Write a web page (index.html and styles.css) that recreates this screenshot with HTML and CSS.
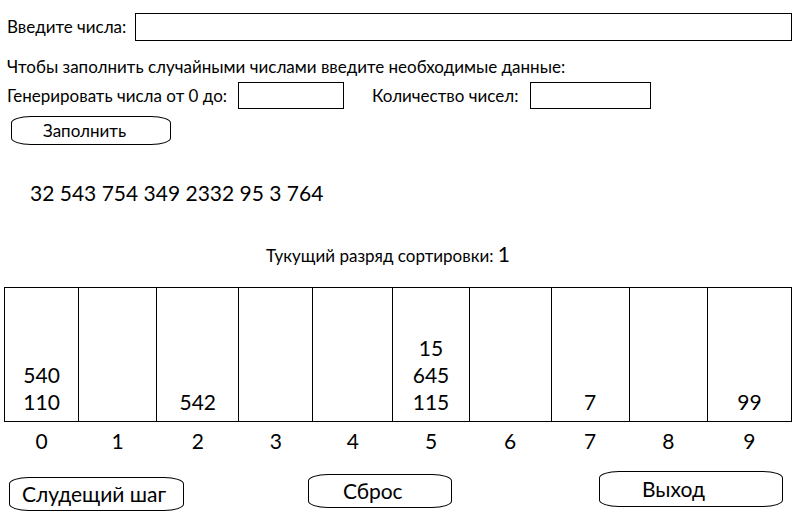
FILE: index.html
```html
<!DOCTYPE html>
<html lang="ru">
<head>
<meta charset="utf-8">
<title>Поразрядная сортировка</title>
<link rel="stylesheet" href="styles.css">
</head>
<body>
<main class="app">
  <form class="form">
    <div class="row row-numbers">
      <label for="numbers">Введите числа:</label>
      <input class="field field-wide" id="numbers" type="text">
    </div>
    <p class="hint">Чтобы заполнить случайными числами введите необходимые данные:</p>
    <div class="row row-random">
      <label class="label-max" for="max">Генерировать числа от 0 до:</label>
      <input class="field field-max" id="max" type="text">
      <label class="label-count" for="count">Количество чисел:</label>
      <input class="field field-count" id="count" type="text">
    </div>
    <button class="btn btn-fill" type="button">Заполнить</button>
  </form>

  <p class="sequence">32 543 754 349 2332 95 3 764</p>
  <p class="digit">Тукущий разряд сортировки: <span class="digit-value">1</span></p>

  <table class="buckets">
    <colgroup>
      <col class="col-a"><col class="col-c"><col class="col-e"><col class="col-a"><col class="col-d">
      <col class="col-b"><col class="col-e"><col class="col-c"><col class="col-c"><col class="col-f">
    </colgroup>
    <tbody>
      <tr>
        <td>540<br>110</td><td></td><td>542</td><td></td><td></td>
        <td>15<br>645<br>115</td><td></td><td>7</td><td></td><td>99</td>
      </tr>
    </tbody>
    <tfoot>
      <tr>
        <th>0</th><th>1</th><th>2</th><th>3</th><th>4</th>
        <th>5</th><th>6</th><th>7</th><th>8</th><th>9</th>
      </tr>
    </tfoot>
  </table>

  <div class="actions">
    <button class="btn btn-next" type="button">Слудещий шаг</button>
    <button class="btn btn-reset" type="button">Сброс</button>
    <button class="btn btn-exit" type="button">Выход</button>
  </div>
</main>
</body>
</html>
```
FILE: styles.css
```css
* {
  box-sizing: border-box;
}

body {
  margin: 0;
  background: #fff;
  color: #000;
  font-family: Lato, "Noto Sans", sans-serif;
  font-size: 17px;
  line-height: 24px;
}

p {
  margin: 0;
}

.form {
  padding: 13px 8px 0 7px;
}

.row {
  display: flex;
  align-items: center;
}

.row-numbers {
  gap: 9px;
}

.field {
  height: 27px;
  padding: 0 6px;
  border: 1px solid #000;
  border-radius: 0;
  background: #fff;
  font: inherit;
}

.field-wide {
  flex: 1;
  min-width: 0;
  height: 28px;
}

.hint {
  margin: 14px 0 3px;
}

.label-max {
  min-width: 231px;
}

.field-max {
  width: 106px;
}

.label-count {
  min-width: 158px;
  margin-left: 28px;
}

.field-count {
  width: 121px;
}

.btn {
  height: 34px;
  padding: 0;
  border: 1px solid #000;
  border-radius: 20px / 7px;
  background: #fff;
  color: #000;
  font: inherit;
  font-size: 21px;
  text-align: left;
}

.btn-fill {
  width: 160px;
  height: 29px;
  margin: 7px 0 0 4px;
  padding-left: 31px;
  font-size: 17px;
}

.sequence {
  margin: 34px 0 0 30px;
  font-size: 21px;
  line-height: 27px;
}

.digit {
  margin-top: 34px;
  padding-right: 24px;
  line-height: 27px;
  text-align: center;
}

.digit-value {
  font-size: 21px;
}

.buckets {
  width: calc(100% - 12px);
  margin: 18px 8px 0 4px;
  border-collapse: collapse;
  table-layout: fixed;
  font-size: 21px;
  line-height: 27px;
  text-align: center;
}

.col-a {
  width: 74px;
}

.col-b {
  width: 76px;
}

.col-c {
  width: 78px;
}

.col-d {
  width: 80px;
}

.col-e {
  width: 82px;
}

.col-f {
  width: 84px;
}

.buckets td {
  height: 134px;
  padding: 0 0 6px;
  border: 1px solid #000;
  vertical-align: bottom;
}

.buckets th {
  padding: 5px 0 0;
  font-weight: 400;
}

.actions {
  display: grid;
  grid-template-columns: 299fr 291fr 184fr;
  height: 40px;
  margin: 17px 17px 0 9px;
}

.btn-next {
  align-self: end;
  width: 175px;
  padding-left: 12px;
}

.btn-reset {
  align-self: center;
  width: 144px;
  padding-left: 34px;
}

.btn-exit {
  align-self: start;
  width: 100%;
  height: 36px;
  padding-left: 42px;
}
```
